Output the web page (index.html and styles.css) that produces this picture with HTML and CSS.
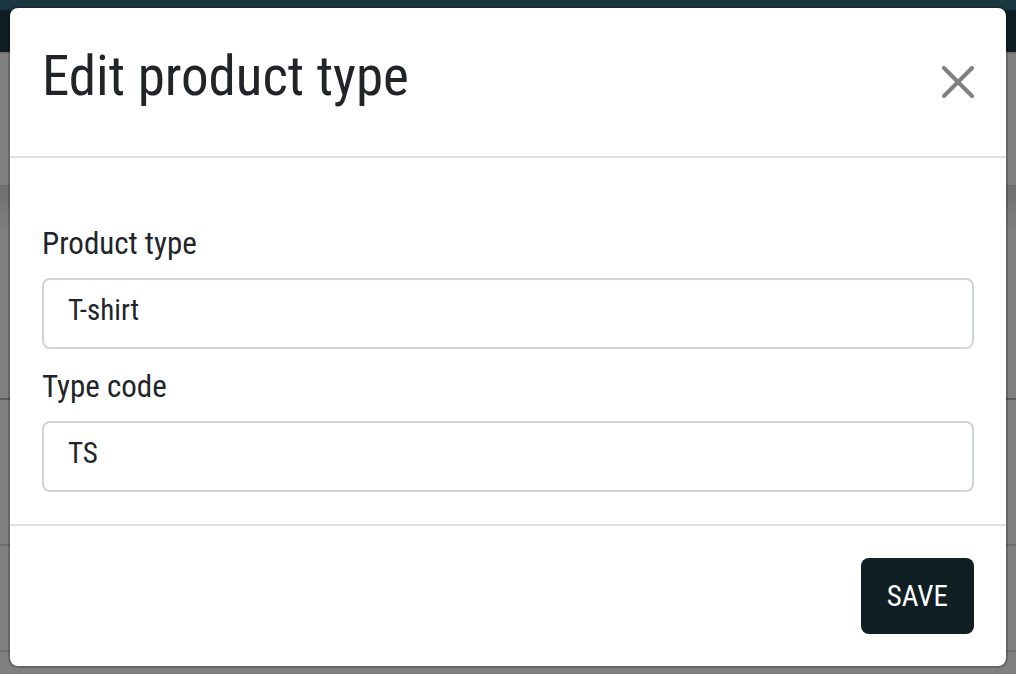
FILE: index.html
```html
<!DOCTYPE html>
<html lang="en">
<head>
<meta charset="utf-8">
<meta name="viewport" content="width=device-width, initial-scale=1">
<title>Edit product type</title>
<link rel="stylesheet" href="styles.css">
</head>
<body>
<div class="page" aria-hidden="true">
  <div class="page-strip"></div>
  <div class="page-nav"></div>
  <div class="page-head"></div>
  <div class="page-row page-row-first"></div>
  <div class="page-row page-row-tall"></div>
  <div class="page-row"></div>
</div>
<div class="overlay">
  <form class="modal" role="dialog" aria-labelledby="title">
    <header class="modal-header">
      <h1 class="modal-title" id="title">Edit product type</h1>
      <button class="close" type="button" aria-label="Close">
        <svg class="close-icon" viewBox="0 0 32 32" aria-hidden="true"><path d="M2 2 30 30M30 2 2 30"/></svg>
      </button>
    </header>
    <div class="modal-body">
      <div class="field">
        <label class="label" for="type">Product type</label>
        <input class="input" id="type" type="text" value="T-shirt">
      </div>
      <div class="field">
        <label class="label" for="code">Type code</label>
        <input class="input" id="code" type="text" value="TS">
      </div>
    </div>
    <footer class="modal-footer">
      <button class="save" type="submit">SAVE</button>
    </footer>
  </form>
</div>
</body>
</html>
```
FILE: styles.css
```css
* {
  box-sizing: border-box;
}

body {
  margin: 0;
  background: #808080;
  color: #212529;
  font-family: "Roboto Condensed", "Liberation Sans Narrow", "Liberation Sans", sans-serif;
}

.page {
  display: flex;
  flex-direction: column;
  height: 100vh;
  overflow: hidden;
}

.page-strip {
  flex: 0 0 10px;
  background: #1a3640;
}

.page-nav {
  flex: 0 0 42px;
  background: #0f1f24;
}

.page-head {
  flex: 0 0 133px;
  border-top: 2px solid #717171;
}

.page-row {
  flex: 0 0 106px;
  border-bottom: 2px solid #707070;
}

.page-row-first {
  flex-basis: 215px;
  border-bottom-color: #5c5c5c;
  background: linear-gradient(#6f6f6f, #808080 50px);
}

.page-row-tall {
  flex-basis: 146px;
}

.overlay {
  position: absolute;
  inset: 0;
  padding: 8px 10px;
}

.modal {
  background: #fff;
  border-radius: 8px;
  box-shadow: 0 0 0 2px rgba(0, 0, 0, 0.2);
}

.modal-header {
  display: flex;
  align-items: center;
  justify-content: space-between;
  padding: 32px 32px 44px;
  border-bottom: 2px solid #dee2e6;
}

.modal-title {
  margin: 0;
  font-size: 55px;
  font-weight: 400;
  line-height: 72px;
}

.close {
  display: flex;
  padding: 12px 0 0;
  border: 0;
  background: none;
}

.close-icon {
  width: 32px;
  height: 32px;
  fill: none;
  stroke: #808080;
  stroke-width: 4;
  stroke-linecap: round;
}

.modal-body {
  display: grid;
  gap: 16px;
  padding: 64px 32px 32px;
}

.field {
  display: grid;
  gap: 12px;
}

.label {
  font-size: 31px;
  line-height: 44px;
}

.input {
  width: 100%;
  height: 71px;
  padding: 0 24px 8px;
  border: 2px solid #ced4da;
  border-radius: 8px;
  background: #fff;
  color: inherit;
  font: inherit;
  font-size: 29px;
}

.modal-footer {
  display: flex;
  justify-content: flex-end;
  padding: 32px;
  border-top: 2px solid #dee2e6;
}

.save {
  padding: 16px 26px;
  border: 0;
  border-radius: 8px;
  background: #0f1f24;
  color: #fff;
  font: inherit;
  font-size: 29px;
  line-height: 44px;
}
```
